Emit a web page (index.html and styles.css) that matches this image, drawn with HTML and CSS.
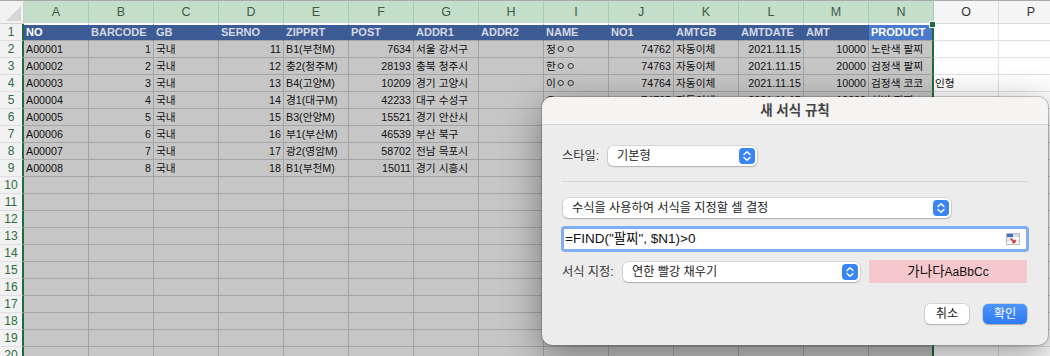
FILE: index.html
```html
<!DOCTYPE html>
<html lang="ko">
<head>
<meta charset="utf-8">
<link rel="stylesheet" href="styles.css">
</head>
<body>
<div class="sheet">
  <div class="row hdr">
    <div class="corner"><span class="tri"></span></div>
    <div class="ch">A</div><div class="ch">B</div><div class="ch">C</div><div class="ch">D</div><div class="ch">E</div><div class="ch">F</div><div class="ch">G</div><div class="ch">H</div><div class="ch">I</div><div class="ch">J</div><div class="ch">K</div><div class="ch">L</div><div class="ch">M</div><div class="ch">N</div><div class="ch un">O</div><div class="ch un">P</div>
  </div>
  <div class="row t">
    <div class="rh">1</div>
    <div class="c th w">NO</div><div class="c th">BARCODE</div><div class="c th">GB</div><div class="c th">SERNO</div><div class="c th">ZIPPRT</div><div class="c th">POST</div><div class="c th">ADDR1</div><div class="c th">ADDR2</div><div class="c th">NAME</div><div class="c th">NO1</div><div class="c th">AMTGB</div><div class="c th">AMTDATE</div><div class="c th">AMT</div><div class="c th act last">PRODUCT</div><div class="c o"></div><div class="c o"></div>
  </div>
  <div class="row">
    <div class="rh">2</div>
    <div class="c">A00001</div><div class="c r">1</div><div class="c">국내</div><div class="c r">11</div><div class="c">B1(부천M)</div><div class="c r">7634</div><div class="c">서울 강서구</div><div class="c"></div><div class="c">정ㅇㅇ</div><div class="c r">74762</div><div class="c">자동이체</div><div class="c r">2021.11.15</div><div class="c r">10000</div><div class="c last">노란색 팔찌</div><div class="c o"></div><div class="c o"></div>
  </div>
  <div class="row">
    <div class="rh">3</div>
    <div class="c">A00002</div><div class="c r">2</div><div class="c">국내</div><div class="c r">12</div><div class="c">충2(청주M)</div><div class="c r">28193</div><div class="c">충북 청주시</div><div class="c"></div><div class="c">한ㅇㅇ</div><div class="c r">74763</div><div class="c">자동이체</div><div class="c r">2021.11.15</div><div class="c r">20000</div><div class="c last">검정색 팔찌</div><div class="c o"></div><div class="c o"></div>
  </div>
  <div class="row">
    <div class="rh">4</div>
    <div class="c">A00003</div><div class="c r">3</div><div class="c">국내</div><div class="c r">13</div><div class="c">B4(고양M)</div><div class="c r">10209</div><div class="c">경기 고양시</div><div class="c"></div><div class="c">이ㅇㅇ</div><div class="c r">74764</div><div class="c">자동이체</div><div class="c r">2021.11.15</div><div class="c r">10000</div><div class="c last">검정색 코코</div><div class="c o spill">인형</div><div class="c o"></div>
  </div>
  <div class="row">
    <div class="rh">5</div>
    <div class="c">A00004</div><div class="c r">4</div><div class="c">국내</div><div class="c r">14</div><div class="c">경1(대구M)</div><div class="c r">42233</div><div class="c">대구 수성구</div><div class="c"></div><div class="c">오ㅇㅇ</div><div class="c r">74765</div><div class="c">자동이체</div><div class="c r">2021.11.15</div><div class="c r">10000</div><div class="c last">실버 팔찌</div><div class="c o"></div><div class="c o"></div>
  </div>
  <div class="row">
    <div class="rh">6</div>
    <div class="c">A00005</div><div class="c r">5</div><div class="c">국내</div><div class="c r">15</div><div class="c">B3(안양M)</div><div class="c r">15521</div><div class="c">경기 안산시</div><div class="c"></div><div class="c"></div><div class="c"></div><div class="c"></div><div class="c"></div><div class="c"></div><div class="c last"></div><div class="c o"></div><div class="c o"></div>
  </div>
  <div class="row">
    <div class="rh">7</div>
    <div class="c">A00006</div><div class="c r">6</div><div class="c">국내</div><div class="c r">16</div><div class="c">부1(부산M)</div><div class="c r">46539</div><div class="c">부산 북구</div><div class="c"></div><div class="c"></div><div class="c"></div><div class="c"></div><div class="c"></div><div class="c"></div><div class="c last"></div><div class="c o"></div><div class="c o"></div>
  </div>
  <div class="row">
    <div class="rh">8</div>
    <div class="c">A00007</div><div class="c r">7</div><div class="c">국내</div><div class="c r">17</div><div class="c">광2(영암M)</div><div class="c r">58702</div><div class="c">전남 목포시</div><div class="c"></div><div class="c"></div><div class="c"></div><div class="c"></div><div class="c"></div><div class="c"></div><div class="c last"></div><div class="c o"></div><div class="c o"></div>
  </div>
  <div class="row">
    <div class="rh">9</div>
    <div class="c">A00008</div><div class="c r">8</div><div class="c">국내</div><div class="c r">18</div><div class="c">B1(부천M)</div><div class="c r">15011</div><div class="c">경기 시흥시</div><div class="c"></div><div class="c"></div><div class="c"></div><div class="c"></div><div class="c"></div><div class="c"></div><div class="c last"></div><div class="c o"></div><div class="c o"></div>
  </div>
  <div class="row"><div class="rh">10</div><div class="c"></div><div class="c"></div><div class="c"></div><div class="c"></div><div class="c"></div><div class="c"></div><div class="c"></div><div class="c"></div><div class="c"></div><div class="c"></div><div class="c"></div><div class="c"></div><div class="c"></div><div class="c last"></div><div class="c o"></div><div class="c o"></div></div>
  <div class="row"><div class="rh">11</div><div class="c"></div><div class="c"></div><div class="c"></div><div class="c"></div><div class="c"></div><div class="c"></div><div class="c"></div><div class="c"></div><div class="c"></div><div class="c"></div><div class="c"></div><div class="c"></div><div class="c"></div><div class="c last"></div><div class="c o"></div><div class="c o"></div></div>
  <div class="row"><div class="rh">12</div><div class="c"></div><div class="c"></div><div class="c"></div><div class="c"></div><div class="c"></div><div class="c"></div><div class="c"></div><div class="c"></div><div class="c"></div><div class="c"></div><div class="c"></div><div class="c"></div><div class="c"></div><div class="c last"></div><div class="c o"></div><div class="c o"></div></div>
  <div class="row"><div class="rh">13</div><div class="c"></div><div class="c"></div><div class="c"></div><div class="c"></div><div class="c"></div><div class="c"></div><div class="c"></div><div class="c"></div><div class="c"></div><div class="c"></div><div class="c"></div><div class="c"></div><div class="c"></div><div class="c last"></div><div class="c o"></div><div class="c o"></div></div>
  <div class="row"><div class="rh">14</div><div class="c"></div><div class="c"></div><div class="c"></div><div class="c"></div><div class="c"></div><div class="c"></div><div class="c"></div><div class="c"></div><div class="c"></div><div class="c"></div><div class="c"></div><div class="c"></div><div class="c"></div><div class="c last"></div><div class="c o"></div><div class="c o"></div></div>
  <div class="row"><div class="rh">15</div><div class="c"></div><div class="c"></div><div class="c"></div><div class="c"></div><div class="c"></div><div class="c"></div><div class="c"></div><div class="c"></div><div class="c"></div><div class="c"></div><div class="c"></div><div class="c"></div><div class="c"></div><div class="c last"></div><div class="c o"></div><div class="c o"></div></div>
  <div class="row"><div class="rh">16</div><div class="c"></div><div class="c"></div><div class="c"></div><div class="c"></div><div class="c"></div><div class="c"></div><div class="c"></div><div class="c"></div><div class="c"></div><div class="c"></div><div class="c"></div><div class="c"></div><div class="c"></div><div class="c last"></div><div class="c o"></div><div class="c o"></div></div>
  <div class="row"><div class="rh">17</div><div class="c"></div><div class="c"></div><div class="c"></div><div class="c"></div><div class="c"></div><div class="c"></div><div class="c"></div><div class="c"></div><div class="c"></div><div class="c"></div><div class="c"></div><div class="c"></div><div class="c"></div><div class="c last"></div><div class="c o"></div><div class="c o"></div></div>
  <div class="row"><div class="rh">18</div><div class="c"></div><div class="c"></div><div class="c"></div><div class="c"></div><div class="c"></div><div class="c"></div><div class="c"></div><div class="c"></div><div class="c"></div><div class="c"></div><div class="c"></div><div class="c"></div><div class="c"></div><div class="c last"></div><div class="c o"></div><div class="c o"></div></div>
  <div class="row"><div class="rh">19</div><div class="c"></div><div class="c"></div><div class="c"></div><div class="c"></div><div class="c"></div><div class="c"></div><div class="c"></div><div class="c"></div><div class="c"></div><div class="c"></div><div class="c"></div><div class="c"></div><div class="c"></div><div class="c last"></div><div class="c o"></div><div class="c o"></div></div>
  <div class="row"><div class="rh">20</div><div class="c"></div><div class="c"></div><div class="c"></div><div class="c"></div><div class="c"></div><div class="c"></div><div class="c"></div><div class="c"></div><div class="c"></div><div class="c"></div><div class="c"></div><div class="c"></div><div class="c"></div><div class="c last"></div><div class="c o"></div><div class="c o"></div></div>
  <span class="handle"></span>
</div>

<div class="dialog">
  <div class="dtitle">새 서식 규칙</div>
  <div class="dbody">
    <div class="line">
      <span class="lbl lbl-style">스타일:</span>
      <div class="popup p-style"><span>기본형</span><svg class="step" viewBox="0 0 16 16"><rect width="16" height="16" rx="4" fill="#3b84f6"/><path d="M5 6.5 8 3.8 11 6.5M5 9.5 8 12.2 11 9.5" fill="none" stroke="#fff" stroke-width="1.5" stroke-linecap="round" stroke-linejoin="round"/></svg></div>
    </div>
    <div class="sep"></div>
    <div class="popup p-rule"><span>수식을 사용하여 서식을 지정할 셀 결정</span><svg class="step" viewBox="0 0 16 16"><rect width="16" height="16" rx="4" fill="#3b84f6"/><path d="M5 6.5 8 3.8 11 6.5M5 9.5 8 12.2 11 9.5" fill="none" stroke="#fff" stroke-width="1.5" stroke-linecap="round" stroke-linejoin="round"/></svg></div>
    <div class="field">
      <span class="ftext">=FIND("팔찌", $N1)&gt;0</span>
      <svg class="ficon" viewBox="0 0 14 12"><rect x="0.5" y="0.5" width="13" height="11" fill="#fff" stroke="#b8bcc4"/><rect x="1" y="1" width="6" height="3" fill="#3c6ec8"/><rect x="7" y="1" width="6" height="3" fill="#d7dbe3"/><rect x="1" y="4" width="6" height="4" fill="#e7e9ee"/><path d="M7 4v7M1 8h12" stroke="#c9ccd3" stroke-width="0.8"/><path d="M4.5 5.5 9 9.5M9 9.5V6.8M9 9.5H6.3" fill="none" stroke="#d6343c" stroke-width="1.6"/></svg>
    </div>
    <div class="line line-fmt">
      <span class="lbl lbl-fmt">서식 지정:</span>
      <div class="popup p-fmt"><span>연한 빨강 채우기</span><svg class="step" viewBox="0 0 16 16"><rect width="16" height="16" rx="4" fill="#3b84f6"/><path d="M5 6.5 8 3.8 11 6.5M5 9.5 8 12.2 11 9.5" fill="none" stroke="#fff" stroke-width="1.5" stroke-linecap="round" stroke-linejoin="round"/></svg></div>
      <div class="preview"><span class="pk">가나다</span><span class="pl">AaBbCc</span></div>
    </div>
    <div class="btns">
      <div class="btn">취소</div>
      <div class="btn ok">확인</div>
    </div>
  </div>
</div>
</body>
</html>
```

FILE: styles.css
```css
html, body {
  margin: 0;
  padding: 0;
  width: 1050px;
  height: 356px;
  overflow: hidden;
  background: #ffffff;
  font-family: "Liberation Sans", "Noto Sans CJK KR", sans-serif;
}

.sheet {
  position: relative;
  width: 1050px;
  height: 356px;
  overflow: hidden;
}

.row {
  display: grid;
  grid-template-columns: 24px repeat(16, 65px);
  height: 17px;
}

.row.hdr {
  height: 24px;
}

.corner {
  position: relative;
  box-sizing: border-box;
  background: #f2f2f2;
  border-top: 1px solid #a9a9a9;
  border-right: 1px solid #cfcfcf;
  border-bottom: 1px solid #d0d0d0;
}

.tri {
  position: absolute;
  right: 2px;
  bottom: 2px;
  width: 0;
  height: 0;
  border-left: 15px solid transparent;
  border-bottom: 15px solid #d6d6d6;
}

.ch {
  box-sizing: border-box;
  background: #c3dfca;
  border-top: 1px solid #a9a9a9;
  border-right: 1px solid #a6cdb1;
  border-bottom: 1px solid #ffffff;
  color: #3f5a47;
  font-size: 12.5px;
  line-height: 22px;
  text-align: center;
}

.ch.un {
  background: #f5f5f5;
  border-right: 1px solid #dadada;
  border-bottom: 1px solid #dadada;
  color: #333333;
}

.rh {
  box-sizing: border-box;
  background: #f2f2f2;
  border-right: 2px solid #1f6b3b;
  border-bottom: 1px solid #dedede;
  color: #2f6b40;
  font-size: 12px;
  line-height: 16px;
  text-align: center;
}

.c {
  box-sizing: border-box;
  background: #c6c6c6;
  border-right: 1px solid #a4a4a4;
  border-bottom: 1px solid #a4a4a4;
  padding: 0 2px;
  font-size: 10.7px;
  line-height: 16px;
  color: #111111;
  white-space: nowrap;
  overflow: hidden;
}

.c.r {
  text-align: right;
}

.c.last {
  border-right: 2px solid #1f6b3b;
}

.c.o {
  background: #ffffff;
  border-right: 1px solid #e1e1e1;
  border-bottom: 1px solid #e1e1e1;
}

.c.spill {
  padding-left: 1px;
}

.row.t .c {
  border-top: 1px solid #ffffff;
}

.c.th {
  background: #3d5b94;
  border-right-color: #3d5b94;
  color: #d3d9e4;
  font-weight: bold;
  font-size: 11px;
  line-height: 15px;
}

.c.th.w {
  color: #ffffff;
}

.c.th.act {
  background: #4b79cc;
  color: #ffffff;
  border-right: 2px solid #1f6b3b;
}

.row.t .c.o {
  border-top: none;
}

.handle {
  position: absolute;
  left: 929px;
  top: 21px;
  width: 5px;
  height: 5px;
  background: #1f6b3b;
  border: 1px solid #ffffff;
}

/* dialog */
.dialog {
  position: absolute;
  left: 542px;
  top: 97px;
  width: 506px;
  height: 248px;
  border-radius: 10px;
  overflow: hidden;
  background: #ececec;
  box-shadow: 0 10px 38px rgba(0, 0, 0, 0.42), 0 0 0 1px rgba(0, 0, 0, 0.18);
  font-family: "Liberation Sans", "Noto Sans CJK KR", sans-serif;
  font-size: 12.2px;
  color: #262626;
}

.dtitle {
  height: 27px;
  line-height: 27px;
  background: #f5f4f3;
  border-bottom: 1px solid #d5d5d5;
  text-align: center;
  font-weight: bold;
  color: #454545;
  font-size: 13.5px;
}

.dbody {
  display: flex;
  flex-direction: column;
  padding: 21px 21px 0 20px;
}

.line {
  display: flex;
  align-items: center;
  height: 20px;
}

.lbl {
  flex: none;
  color: #333333;
  line-height: 20px;
  white-space: nowrap;
}

.lbl-style {
  width: 46px;
}

.lbl-fmt {
  width: 61px;
}

.popup {
  box-sizing: border-box;
  flex: none;
  display: flex;
  align-items: center;
  justify-content: space-between;
  height: 20px;
  padding: 0 2px 0 9px;
  background: #ffffff;
  border-radius: 5px;
  box-shadow: 0 0 0 0.5px rgba(0, 0, 0, 0.18), 0 1px 1.5px rgba(0, 0, 0, 0.18);
  line-height: 20px;
  color: #222222;
}

.step {
  width: 16px;
  height: 16px;
  flex: none;
}

.p-style {
  width: 149px;
}

.sep {
  height: 1px;
  background: #d6d6d6;
  margin: 15px 0 16px;
}

.p-rule {
  width: 388px;
  margin-left: 1px;
}

.field {
  box-sizing: border-box;
  display: flex;
  align-items: center;
  justify-content: space-between;
  height: 26px;
  margin: 8px -2px 0 -1px;
  padding: 0 6px 0 1px;
  background: #ffffff;
  border: 3px solid #80aef2;
  border-radius: 4px;
}

.ftext {
  font-size: 13.5px;
  color: #111111;
  line-height: 20px;
}

.ficon {
  width: 14px;
  height: 12px;
}

.line-fmt {
  height: 23px;
  margin-top: 8px;
}

.p-fmt {
  width: 237px;
}

.preview {
  flex: none;
  width: 158px;
  height: 23px;
  margin-left: 9px;
  background: #f5c8ce;
  text-align: center;
  line-height: 23px;
  color: #111111;
}

.pk {
  font-size: 13.5px;
}

.pl {
  font-size: 12px;
}

.btns {
  display: flex;
  justify-content: flex-end;
  gap: 14px;
  margin-top: 21px;
}

.btn {
  width: 44px;
  height: 20px;
  line-height: 20px;
  text-align: center;
  border-radius: 5px;
  background: #ffffff;
  box-shadow: 0 0 0 0.5px rgba(0, 0, 0, 0.18), 0 1px 1.5px rgba(0, 0, 0, 0.2);
  color: #222222;
}

.btn.ok {
  background: linear-gradient(#4b95f9, #2e7bf4);
  color: #ffffff;
}
```
